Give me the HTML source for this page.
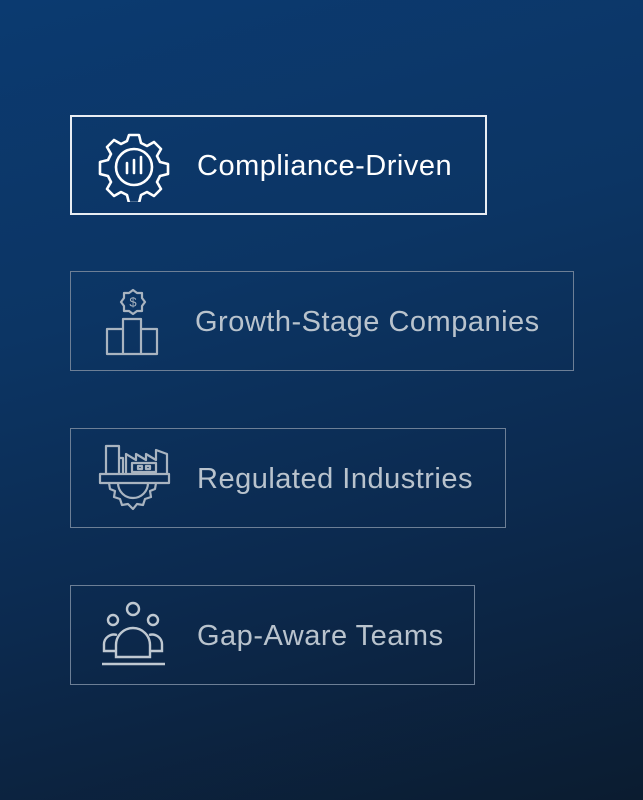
<!DOCTYPE html>
<html><head><style>
html,body{margin:0;padding:0}
body{width:643px;height:800px;overflow:hidden;position:relative;font-family:"Liberation Sans",sans-serif;
background:linear-gradient(165deg,#0b3a70 0%,#0c3564 35%,#0c2a4f 65%,#0b1c30 100%);}
.b{position:absolute;left:70px;box-sizing:border-box;height:100px;border:1px solid #6d7f96;}
.b span{position:absolute;left:126px;top:34px;font-size:29px;color:#b9c3cd;letter-spacing:0.5px;white-space:nowrap}
.b svg{position:absolute;left:25px;top:15px}
</style></head><body>
<div class="b" style="top:115px;width:417px;border:2px solid #e8edf3">
<span style="color:#fff;left:125px;top:33px">Compliance-Driven</span>
<svg width="74" height="70" viewBox="0 0 74 70" fill="none" stroke="#fff" stroke-width="2.6" stroke-linejoin="round">
<path d="M32 3h10l2 8 6 3 7-4 7 7-4 7 3 6 8 2v10l-8 2-3 6 4 7-7 7-7-4-6 3-2 8H32l-2-8-6-3-7 4-7-7 4-7-3-6-8-2V30l8-2 3-6-4-7 7-7 7 4 6-3z"/>
<circle cx="37" cy="35" r="18"/>
<path d="M30 31v10M37 28v13M44 25v16" stroke-linecap="round"/>
</svg></div>
<div class="b" style="top:271px;width:504px"><span style="left:124px">Growth-Stage Companies</span>
<svg width="74" height="72" viewBox="0 0 74 72" fill="none" stroke="#a9b4c0" stroke-width="2.2" stroke-linejoin="round">
<path d="M37 3l4 3h5v5l3 4-3 4v5h-5l-4 3-4-3h-5v-5l-3-4 3-4V6h5z"/>
<text x="37" y="19.5" fill="#a9b4c0" stroke="none" font-size="13" text-anchor="middle" font-family="Liberation Sans">$</text>
<path d="M11 67V42h16v25zM27 67V32h18v35zM45 67V42h16v25z"/>
</svg></div>
<div class="b" style="top:428px;width:436px"><span>Regulated Industries</span>
<svg width="76" height="72" viewBox="0 0 76 72" fill="none" stroke="#a9b4c0" stroke-width="2.2" stroke-linejoin="round">
<path d="M10 30V2h13v28M23 30V14h4v16"/>
<path d="M30 30V10l10 6v-6l10 6v-6l10 6V6l11 4v20"/>
<path d="M4 30h69v9H4z"/>
<rect x="36" y="19" width="24" height="9"/>
<path d="M42 22h4v3h-4zM50 22h4v3h-4z"/>
<path d="M22 39a15 15 0 0 0 30 0M13 39l1 6 5 2-1 6 6 2 2 6 6-1 5 5 4-5 6 1 2-6 6-2-1-6 5-2 1-6"/>
</svg></div>
<div class="b" style="top:585px;width:405px"><span>Gap-Aware Teams</span>
<svg width="76" height="72" viewBox="0 0 76 72" fill="none" stroke="#bfc8d1" stroke-width="2.4">
<circle cx="37" cy="8" r="6"/><circle cx="17" cy="19" r="5"/><circle cx="57" cy="19" r="5"/>
<path d="M20 56V44a17 17 0 0 1 34 0v12zM20 50H8v-6a10 10 0 0 1 13-10M54 50h12v-6a10 10 0 0 0-13-10M6 63h63"/>
</svg></div>
</body></html>
